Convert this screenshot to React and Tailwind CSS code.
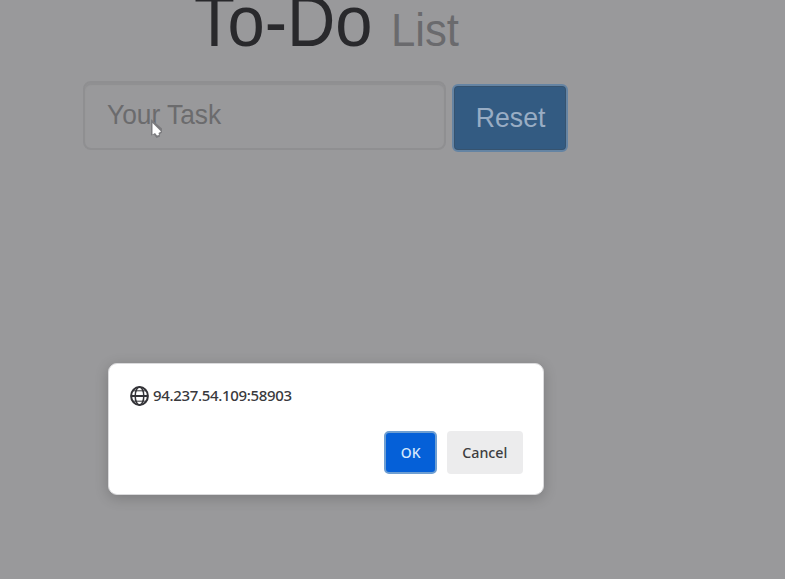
function GlobeIcon() {
  return (
    <svg className="block h-[22px] w-[21px] shrink-0" viewBox="0 0 21 22" fill="none" stroke="#333337">
      <ellipse cx="10.5" cy="11" rx="8.4" ry="9" strokeWidth="2" />
      <ellipse cx="10.5" cy="11" rx="4.3" ry="9" strokeWidth="1.5" />
      <path d="M2 11H19" strokeWidth="2" />
      <path d="M3.5 5.8H17.5M3.5 16.2H17.5" strokeWidth="1" />
    </svg>
  );
}

function Cursor() {
  return (
    <svg className="absolute left-[149px] top-[117px] h-[22px] w-[14px]" viewBox="0 0 14 22">
      <path d="M2 2V18.5L5 17.5L7.5 21L11 19.5L10.5 17.5L13 15.5V11.5Z" fill="#7b7b7e" />
      <path d="M3.5 6V17.5L6 16L8 18.5L10 18L9.5 16L12 14.5Z" fill="#fff" />
    </svg>
  );
}

function Dialog() {
  return (
    <div className="absolute left-[108px] top-[363px] flex h-[132px] w-[436px] flex-col justify-between rounded-[9px] border border-[#dadadc] bg-white pt-[21px] pr-[20px] pb-[20px] pl-[20px] shadow-[0_3px_14px_rgba(0,0,0,0.2)] font-['Noto_Sans',sans-serif]">
      <div className="flex items-center">
        <GlobeIcon />
        <div className="-mt-[2px] ml-[3px] text-[15px] leading-[22px] font-medium tracking-[-0.33px] whitespace-nowrap text-[#39393c]">
          94.237.54.109:58903
        </div>
      </div>
      <div className="flex justify-end gap-[10px] text-[15px] font-medium">
        <button className="h-[43px] w-[53px] rounded-[5px] border-2 border-[#6f9fd2] bg-[#0560d8] text-[#d4e8fd]">
          <span className="inline-block scale-x-[0.93]">OK</span>
        </button>
        <button className="h-[43px] w-[76px] rounded-[4px] bg-[#ececed] text-[#3d3d40]">
          <span className="inline-block scale-x-[0.95]">Cancel</span>
        </button>
      </div>
    </div>
  );
}

export default function App() {
  return (
    <div className="relative h-[579px] w-[785px] overflow-hidden bg-[#99999b] font-['Liberation_Sans',Arial,sans-serif]">
      <h1 className="-mt-[15px] ml-[194px] flex h-[96px] items-baseline text-[72px] leading-[72px] whitespace-nowrap text-[#29292c]">
        <span className="w-[197px] origin-left scale-x-[0.93]">To-Do</span>
        <small className="origin-left scale-x-[0.95] text-[46px] text-[#6a6a6d]">List</small>
      </h1>
      <div className="ml-[83px] flex items-start gap-[6px]">
        <div className="flex h-[69px] w-[363px] items-center rounded-[8px] border-2 border-[#8f8f91] pb-[2px] pl-[22px] text-[28px] text-[#6b6b6d] shadow-[inset_0_2px_1px_#909092]">
          <span className="origin-left scale-x-[0.94] whitespace-nowrap">Your Task</span>
        </div>
        <button className="mt-[3px] h-[68px] w-[116px] rounded-[6px] border-2 border-[#6584a3] bg-[#335b82] pl-[2px] text-[28px] text-[#99adc4] shadow-[inset_0_0_0_1px_#36536f]">
          <span className="inline-block scale-x-[0.95]">Reset</span>
        </button>
      </div>
      <Cursor />
      <Dialog />
    </div>
  );
}
